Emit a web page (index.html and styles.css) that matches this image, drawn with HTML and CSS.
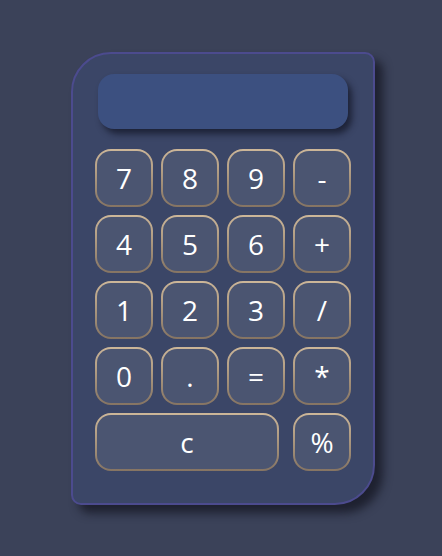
FILE: index.html
```html
<!DOCTYPE html>
<html>
<head>
<meta charset="utf-8">
<link rel="stylesheet" href="styles.css">
</head>
<body>
<div class="calc">
  <div class="display"></div>
  <div class="keys">
    <button class="key">7</button>
    <button class="key">8</button>
    <button class="key">9</button>
    <button class="key">-</button>
    <button class="key">4</button>
    <button class="key">5</button>
    <button class="key">6</button>
    <button class="key">+</button>
    <button class="key">1</button>
    <button class="key">2</button>
    <button class="key">3</button>
    <button class="key">/</button>
    <button class="key">0</button>
    <button class="key">.</button>
    <button class="key">=</button>
    <button class="key">*</button>
    <button class="key wide">c</button>
    <button class="key">%</button>
  </div>
</div>
</body>
</html>
```

FILE: styles.css
```css
html, body {
  margin: 0;
  padding: 0;
}
body {
  background: #3b4259;
  width: 442px;
  height: 556px;
  font-family: "Open Sans", "DejaVu Sans", sans-serif;
  padding-top: 52px;
  padding-left: 71px;
  box-sizing: border-box;
}
.calc {
  width: 304px;
  height: 453px;
  box-sizing: border-box;
  border: 2px solid #4c4b8e;
  border-radius: 40px 10px 40px 10px;
  background: #3b4667;
  box-shadow: 8px 8px 10px rgba(20, 22, 34, 0.75);
  padding: 20px 22px 32px 22px;
}
.display {
  margin: 0 3px;
  height: 55px;
  border-radius: 16px;
  background: #3c5080;
  box-shadow: 4px 5px 6px rgba(22, 26, 44, 0.8);
}
.keys {
  margin-top: 20px;
  display: grid;
  grid-template-columns: repeat(4, 58px);
  grid-auto-rows: 58px;
  gap: 8px;
}
.key {
  border: 2px solid transparent;
  border-radius: 16px;
  background:
    linear-gradient(#4b5571, #4b5571) padding-box,
    linear-gradient(#cdb799, #857463) border-box;
  color: #ffffff;
  font-family: "Open Sans", "DejaVu Sans", sans-serif;
  font-size: 28px;
  padding: 0;
  display: flex;
  align-items: center;
  justify-content: center;
  line-height: 1;
}
.wide {
  grid-column: span 3;
  width: 184px;
}
```
